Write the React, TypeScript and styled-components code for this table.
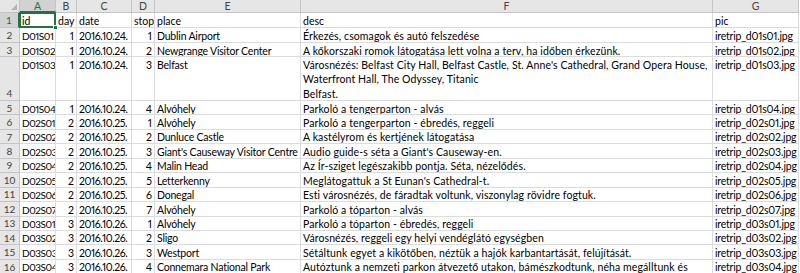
import React from "react";
import styled, { createGlobalStyle, css } from "styled-components";

const GlobalStyle = createGlobalStyle`
  html, body { margin: 0; padding: 0; background: #ffffff; overflow: hidden; }
  body { font-family: "Lato", "Liberation Sans", sans-serif; }
`;

const GREEN = "#217346";
const GRID = "#dadcdd";
const HEAD_BG = "#e6e6e6";
const HEAD_LINE = "#c4c4c4";

const ROW_HEIGHTS = [13, 15, 15, 14, 44, ...Array(12).fill(14.45)];

const Sheet = styled.div`
  display: grid;
  grid-template-columns: 20px 36px 21px 55px 23px 146px 412px 86px;
  grid-template-rows: ${ROW_HEIGHTS.map((h) => `${h}px`).join(" ")};
  font-family: "Lato", "Liberation Sans", sans-serif;
  font-size: 10.5px;
  color: #000;
  width: max-content;
`;

const Corner = styled.div`
  position: relative;
  background: ${HEAD_BG};
  border-right: 1px solid ${HEAD_LINE};
  border-bottom: 1px solid ${HEAD_LINE};
  box-sizing: border-box;
  &::after {
    content: "";
    position: absolute;
    right: 2px;
    bottom: 2px;
    width: 0;
    height: 0;
    border-left: 6px solid transparent;
    border-bottom: 6px solid #b3b3b3;
  }
`;

const ColHeader = styled.div<{ $selected?: boolean }>`
  background: ${HEAD_BG};
  color: #444444;
  font-size: 10.5px;
  text-align: center;
  line-height: 12px;
  border-right: 1px solid ${HEAD_LINE};
  border-bottom: 1px solid ${HEAD_LINE};
  box-sizing: border-box;
  ${(p) =>
    p.$selected &&
    css`
      background: #d2d2d2;
      color: ${GREEN};
      border-bottom: 2px solid ${GREEN};
    `}
`;

const RowHeader = styled.div<{ $selected?: boolean; $tall?: boolean }>`
  background: ${HEAD_BG};
  color: #444444;
  font-size: 10px;
  display: flex;
  justify-content: center;
  align-items: ${(p) => (p.$tall ? "flex-end" : "center")};
  padding-bottom: ${(p) => (p.$tall ? "1px" : "0")};
  border-right: 1px solid ${HEAD_LINE};
  border-bottom: 1px solid ${HEAD_LINE};
  box-sizing: border-box;
  ${(p) =>
    p.$selected &&
    css`
      background: #d2d2d2;
      color: ${GREEN};
      border-right: 2px solid ${GREEN};
    `}
`;

const Cell = styled.div<{
  $align?: "left" | "right";
  $wrap?: boolean;
  $track?: number;
  $size?: number;
}>`
  position: relative;
  box-sizing: border-box;
  border-right: 1px solid ${GRID};
  border-bottom: 1px solid ${GRID};
  padding: 0.5px 2px 0 2px;
  line-height: 14.5px;
  font-size: ${(p) => p.$size ?? 10.5}px;
  letter-spacing: ${(p) => p.$track ?? 0}px;
  font-variant-numeric: proportional-nums;
  text-align: ${(p) => p.$align || "left"};
  white-space: ${(p) => (p.$wrap ? "pre-line" : "nowrap")};
  overflow: hidden;
`;

const Selection = styled.div`
  position: absolute;
  inset: -1px -1px -1px -1px;
  border: 2px solid ${GREEN};
  pointer-events: none;
  &::after {
    content: "";
    position: absolute;
    right: -4px;
    bottom: -4px;
    width: 5px;
    height: 5px;
    background: ${GREEN};
    border: 1px solid #ffffff;
    box-sizing: border-box;
  }
`;

const SelCell = styled(Cell)`
  overflow: visible;
  z-index: 2;
`;

type Row = [string, string, string, string, string, string, string];

const rows: Row[] = [
  ["id", "day", "date", "stop", "place", "desc", "pic"],
  ["D01S01", "1", "2016.10.24.", "1", "Dublin Airport", "Érkezés, csomagok és autó felszedése", "iretrip_d01s01.jpg"],
  ["D01S02", "1", "2016.10.24.", "2", "Newgrange Visitor Center", "A kőkorszaki romok látogatása lett volna a terv, ha időben érkezünk.", "iretrip_d01s02.jpg"],
  [
    "D01S03",
    "1",
    "2016.10.24.",
    "3",
    "Belfast",
    "Városnézés: Belfast City Hall, Belfast Castle, St. Anne's Cathedral, Grand Opera House,\nWaterfront Hall, The Odyssey, Titanic\nBelfast.",
    "iretrip_d01s03.jpg",
  ],
  ["D01S04", "1", "2016.10.24.", "4", "Alvóhely", "Parkoló a tengerparton - alvás", "iretrip_d01s04.jpg"],
  ["D02S01", "2", "2016.10.25.", "1", "Alvóhely", "Parkoló a tengerparton - ébredés, reggeli", "iretrip_d02s01.jpg"],
  ["D02S02", "2", "2016.10.25.", "2", "Dunluce Castle", "A kastélyrom és kertjének látogatása", "iretrip_d02s02.jpg"],
  ["D02S03", "2", "2016.10.25.", "3", "Giant's Causeway Visitor Centre", "Audio guide-s séta a Giant's Causeway-en.", "iretrip_d02s03.jpg"],
  ["D02S04", "2", "2016.10.25.", "4", "Malin Head", "Az Ír-sziget legészakibb pontja. Séta, nézelődés.", "iretrip_d02s04.jpg"],
  ["D02S05", "2", "2016.10.25.", "5", "Letterkenny", "Meglátogattuk a St Eunan's Cathedral-t.", "iretrip_d02s05.jpg"],
  ["D02S06", "2", "2016.10.25.", "6", "Donegal", "Esti városnézés, de fáradtak voltunk, viszonylag rövidre fogtuk.", "iretrip_d02s06.jpg"],
  ["D02S07", "2", "2016.10.25.", "7", "Alvóhely", "Parkoló a tóparton - alvás", "iretrip_d02s07.jpg"],
  ["D03S01", "3", "2016.10.26.", "1", "Alvóhely", "Parkoló a tóparton - ébredés, reggeli", "iretrip_d03s01.jpg"],
  ["D03S02", "3", "2016.10.26.", "2", "Sligo", "Városnézés, reggeli egy helyi vendéglátó egységben", "iretrip_d03s02.jpg"],
  ["D03S03", "3", "2016.10.26.", "3", "Westport", "Sétáltunk egyet a kikötőben, néztük a hajók karbantartását, felújítását.", "iretrip_d03s03.jpg"],
  ["D03S04", "3", "2016.10.26.", "4", "Connemara National Park", "Autóztunk a nemzeti parkon átvezető utakon, bámészkodtunk, néha megálltunk és", "iretrip_d03s04.jpg"],
];

const letters = ["A", "B", "C", "D", "E", "F", "G"];

// per-column font size and tracking to bring Lato close to the Calibri widths of the original
const COLS: { size: number; track: number }[] = [
  { size: 10, track: -0.45 },
  { size: 10.5, track: 0 },
  { size: 10.5, track: -0.4 },
  { size: 10.5, track: 0 },
  { size: 10.5, track: -0.2 },
  { size: 10.5, track: 0.1 },
  { size: 10.5, track: -0.2 },
];

export default function App() {
  return (
    <>
      <GlobalStyle />
      <Sheet>
        <Corner />
        {letters.map((l) => (
          <ColHeader key={l} $selected={l === "A"}>
            {l}
          </ColHeader>
        ))}
        {rows.map((r, i) => {
          const rowNum = i + 1;
          const isNumRow = i > 0;
          return (
            <React.Fragment key={rowNum}>
              <RowHeader $selected={rowNum === 1} $tall={rowNum === 4}>
                {rowNum}
              </RowHeader>
              {r.map((v, c) => {
                const right = isNumRow && (c === 1 || c === 3);
                const cfg = rowNum === 1 ? { size: 10.5, track: 0 } : COLS[c];
                if (rowNum === 1 && c === 0) {
                  return (
                    <SelCell key={c}>
                      {v}
                      <Selection />
                    </SelCell>
                  );
                }
                return (
                  <Cell
                    key={c}
                    $align={right ? "right" : "left"}
                    $wrap={rowNum === 4 && c === 5}
                    $track={cfg.track}
                    $size={cfg.size}
                  >
                    {v}
                  </Cell>
                );
              })}
            </React.Fragment>
          );
        })}
      </Sheet>
    </>
  );
}
